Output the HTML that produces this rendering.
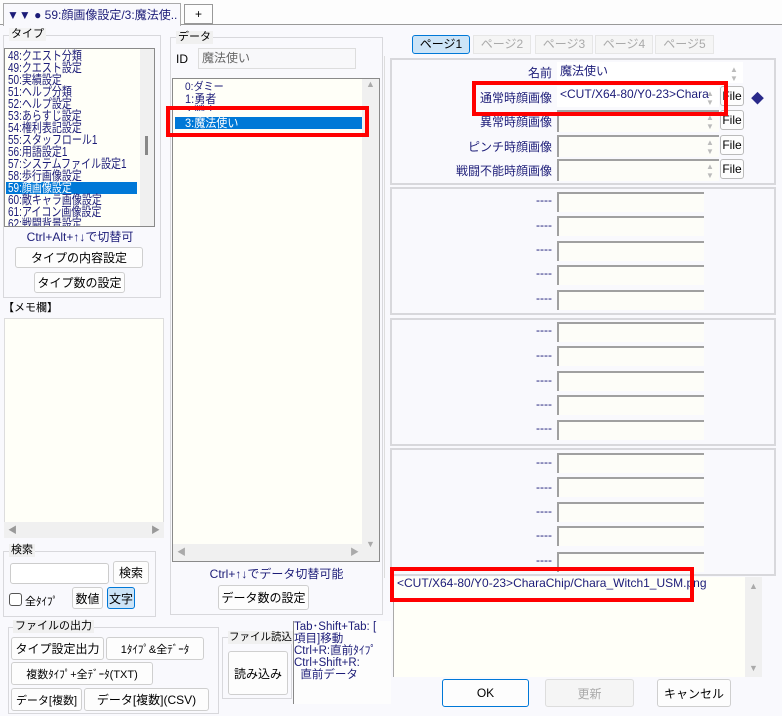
<!DOCTYPE html>
<html><head><meta charset="utf-8"><style>
*{box-sizing:border-box;margin:0;padding:0}
body{width:782px;height:716px;background:#f9f9fd;font-family:"Liberation Sans","Noto Sans CJK JP",sans-serif;font-size:12px;color:#000;position:relative;overflow:hidden}
.a{position:absolute}
.grp{position:absolute;border:1px solid #d8d8dc}
.lbl{position:absolute;background:#f0f0f0;padding:0 2px;line-height:13px;font-size:11px}
.btn{position:absolute;background:#fdfdfd;border:1px solid #cfcfcf;border-radius:3px;text-align:center;font-size:12px;display:flex;align-items:center;justify-content:center;white-space:nowrap}
.nav{color:#1c1c78}
.list{position:absolute;background:#fffff8;border:1px solid #8a8a8a}
.it{position:absolute;left:3px;height:12px;line-height:12px;font-size:12.5px;color:#1c1c78;white-space:nowrap;transform:scaleX(0.8);transform-origin:left center}
.dt{position:absolute;left:12px;height:12px;line-height:12px;font-size:12px;color:#1c1c78;white-space:nowrap;transform:scaleX(0.92);transform-origin:left center}
.in{position:absolute;background:#fdfdf8;border-top:2px solid #a0a0a0;border-left:2px solid #a0a0a0}
.rl{position:absolute;text-align:right;width:160px;color:#1c1c78;font-size:12px}
.red{position:absolute;border:4px solid #ff0000}
.fb{position:absolute;width:24px;height:20px;background:#fdfdfd;border:1px solid #bbb;border-radius:3px;font-size:12px;text-align:center;line-height:18px}
.sp{position:absolute;width:14px;color:#bbb;font-size:8px;text-align:center;line-height:9px}
.pt{position:absolute;top:35px;height:19px;border:1px solid #e6e6e6;background:#f5f5f5;color:#aaa;text-align:center;line-height:17px;font-size:12px}
</style></head><body>
<div class="a" style="left:0;top:0;width:782px;height:25px;background:#fdfdfd;border-bottom:1px solid #999"></div>
<div class="a" style="left:3px;top:3px;width:178px;height:23px;background:#f9f9fd;border:1px solid #aaa;border-bottom:none;font-size:12px;line-height:22px;padding-left:3px;color:#1c1c78;white-space:nowrap;overflow:hidden">▼▼ ● 59:顔画像設定/3:魔法使..</div>
<div class="a" style="left:184px;top:4px;width:29px;height:20px;border:1px solid #999;background:#fdfdfd;text-align:center;line-height:18px">+</div>

<div class="grp" style="left:3px;top:35px;width:158px;height:263px"></div>
<div class="lbl" style="left:9px;top:28px;background:#f3f3f3">タイプ</div>
<div class="list" style="left:4px;top:48px;width:151px;height:179px;overflow:hidden">
<div class="a" style="left:135px;top:0;width:15px;height:177px;background:#f0f0f0"></div>
<div class="a" style="left:140px;top:87px;width:3px;height:19px;background:#888"></div>
<div class="it" style="top:1px">48:クエスト分類</div>
<div class="it" style="top:13px">49:クエスト設定</div>
<div class="it" style="top:25px">50:実績設定</div>
<div class="it" style="top:37px">51:ヘルプ分類</div>
<div class="it" style="top:49px">52:ヘルプ設定</div>
<div class="it" style="top:61px">53:あらすじ設定</div>
<div class="it" style="top:73px">54:権利表記設定</div>
<div class="it" style="top:85px">55:スタッフロール1</div>
<div class="it" style="top:97px">56:用語設定1</div>
<div class="it" style="top:109px">57:システムファイル設定1</div>
<div class="it" style="top:121px">58:歩行画像設定</div>
<div class="a" style="left:1px;top:133px;width:131px;height:12px;background:#0078d7"></div>
<div class="it" style="top:133px;color:#fff">59:顔画像設定</div>
<div class="it" style="top:145px">60:敵キャラ画像設定</div>
<div class="it" style="top:157px">61:アイコン画像設定</div>
<div class="it" style="top:169px">62:戦闘背景設定</div>
</div>
<div class="a nav" style="left:0;width:160px;top:228px;text-align:center;font-size:12px">Ctrl+Alt+↑↓で切替可</div>
<div class="btn" style="left:15px;top:247px;width:128px;height:21px">タイプの内容設定</div>
<div class="btn" style="left:34px;top:272px;width:91px;height:21px">タイプ数の設定</div>

<div class="a" style="left:3px;top:299px;font-size:11px">【メモ欄】</div>
<div class="a" style="left:4px;top:318px;width:160px;height:220px;background:#fffff8;border:1px solid #ddd"></div>
<div class="a" style="left:4px;top:522px;width:160px;height:16px;background:#f0f0f0;color:#999;font-size:9px;line-height:16px;padding:0 4px">◀<span style="float:right">▶</span></div>

<div class="grp" style="left:3px;top:551px;width:153px;height:66px"></div>
<div class="lbl" style="left:9px;top:544px">検索</div>
<div class="a" style="left:10px;top:563px;width:99px;height:21px;background:#fff;border:1px solid #ccc;border-radius:3px"></div>
<div class="btn" style="left:113px;top:561px;width:36px;height:23px">検索</div>
<div class="a" style="left:9px;top:593px;width:13px;height:13px;border:1px solid #555;border-radius:3px;background:#fff"></div>
<div class="a" style="left:25px;top:593px;font-size:11px">全ﾀｲﾌﾟ</div>
<div class="btn" style="left:72px;top:587px;width:31px;height:22px">数値</div>
<div class="btn" style="left:107px;top:587px;width:28px;height:22px;background:#cce4f7;border-color:#0078d7">文字</div>

<div class="grp" style="left:8px;top:627px;width:211px;height:87px"></div>
<div class="lbl" style="left:13px;top:620px">ファイルの出力</div>
<div class="btn" style="left:11px;top:637px;width:93px;height:23px">タイプ設定出力</div>
<div class="btn" style="left:106px;top:637px;width:98px;height:23px;font-size:11px">1ﾀｲﾌﾟ&amp;全ﾃﾞｰﾀ</div>
<div class="btn" style="left:11px;top:662px;width:142px;height:23px;font-size:11px">複数ﾀｲﾌﾟ+全ﾃﾞｰﾀ(TXT)</div>
<div class="btn" style="left:11px;top:688px;width:71px;height:23px;font-size:11px">データ[複数]</div>
<div class="btn" style="left:84px;top:688px;width:125px;height:23px">データ[複数](CSV)</div>
<div class="grp" style="left:222px;top:637px;width:70px;height:62px"></div>
<div class="lbl" style="left:228px;top:631px;font-size:10.5px;padding:0 1px">ファイル読込</div>
<div class="btn" style="left:228px;top:651px;width:60px;height:44px">読み込み</div>
<div class="a nav" style="left:293px;top:621px;width:98px;height:83px;border-left:1px solid #888;background:#fdfdfd;font-size:11.5px;line-height:12px;white-space:nowrap;overflow:hidden">Tab･Shift+Tab: [<br>項目]移動<br>Ctrl+R:直前ﾀｲﾌﾟ<br>Ctrl+Shift+R:<br>&nbsp;&nbsp;直前データ</div>

<div class="grp" style="left:170px;top:37px;width:213px;height:578px"></div>
<div class="lbl" style="left:176px;top:31px">データ</div>
<div class="a" style="left:176px;top:52px;font-size:12px">ID</div>
<div class="a" style="left:198px;top:48px;width:158px;height:21px;border:1px solid #ddd;background:#f8f8fa;color:#666;padding-left:3px;line-height:19px">魔法使い</div>
<div class="list" style="left:172px;top:78px;width:208px;height:484px;overflow:hidden">
<div class="a" style="left:189px;top:0;width:17px;height:482px;background:#f0f0f0;color:#aaa;font-size:9px;text-align:center">▲<div style="position:absolute;bottom:12px;width:17px">▼</div></div>
<div class="a" style="left:0;top:465px;width:190px;height:17px;background:#f0f0f0;color:#aaa;font-size:9px;line-height:17px;padding:0 4px">◀<span style="float:right">▶</span></div>
<div class="dt" style="top:2px;font-size:11px">0:ダミー</div>
<div class="dt" style="top:14px">1:勇者</div>
<div class="dt" style="top:26px;height:6px;overflow:hidden">2:戦士</div>
<div class="a" style="left:2px;top:38px;width:187px;height:12px;background:#0078d7"></div>
<div class="dt" style="top:38px;color:#fff">3:魔法使い</div>
</div>
<div class="red" style="left:166px;top:106px;width:203px;height:31px"></div>
<div class="a nav" style="left:170px;width:213px;top:565px;text-align:center;font-size:12px">Ctrl+↑↓でデータ切替可能</div>
<div class="btn" style="left:218px;top:585px;width:91px;height:25px">データ数の設定</div>

<div class="a" style="left:384px;top:56px;width:392px;height:522px;border-left:1px solid #ddd"></div>
<div class="pt" style="left:412px;width:58px;background:#cce4f7;border-color:#0078d7;color:#000;border-radius:3px">ページ1</div>
<div class="pt" style="left:473px;width:58px">ページ2</div>
<div class="pt" style="left:535px;width:58px">ページ3</div>
<div class="pt" style="left:595px;width:58px">ページ4</div>
<div class="pt" style="left:655px;width:59px">ページ5</div>

<div class="grp" style="left:390px;top:58px;width:386px;height:127px;border-width:2px"></div>
<div class="rl" style="left:392px;top:64px">名前</div>
<div class="in" style="left:557px;top:62px;width:186px;height:21px;border:none;background:#fff;padding-left:3px;color:#1c1c78">魔法使い</div>
<div class="sp" style="left:727px;top:65px">▲<br>▼</div>
<div class="rl" style="left:392px;top:89px">通常時顔画像</div>
<div class="in" style="left:557px;top:86px;width:162px;height:21px;border:none;background:#fff;padding-left:3px;color:#1c1c78;white-space:nowrap;overflow:hidden;line-height:17px">&lt;CUT/X64-80/Y0-23&gt;Chara</div>
<div class="sp" style="left:703px;top:89px">▲<br>▼</div>
<div class="fb" style="left:720px;top:86px">File</div>
<div class="a" style="left:751px;top:88px;color:#2a2a8a;font-size:13px">◆</div>
<div class="rl" style="left:392px;top:113px">異常時顔画像</div>
<div class="in" style="left:557px;top:110px;width:162px;height:22px"></div>
<div class="sp" style="left:703px;top:113px">▲<br>▼</div>
<div class="fb" style="left:720px;top:110px">File</div>
<div class="rl" style="left:392px;top:138px">ピンチ時顔画像</div>
<div class="in" style="left:557px;top:135px;width:162px;height:22px"></div>
<div class="sp" style="left:703px;top:138px">▲<br>▼</div>
<div class="fb" style="left:720px;top:135px">File</div>
<div class="rl" style="left:392px;top:162px">戦闘不能時顔画像</div>
<div class="in" style="left:557px;top:159px;width:162px;height:22px"></div>
<div class="sp" style="left:703px;top:162px">▲<br>▼</div>
<div class="fb" style="left:720px;top:159px">File</div>
<div class="red" style="left:472px;top:81px;width:256px;height:35px"></div>

<div class="grp" style="left:390px;top:187px;width:386px;height:128px;border-width:2px"></div>
<div class="grp" style="left:390px;top:318px;width:386px;height:128px;border-width:2px"></div>
<div class="grp" style="left:390px;top:448px;width:386px;height:128px;border-width:2px"></div>
<div class="rl" style="left:392px;top:193px">----</div><div class="in" style="left:557px;top:192px;width:147px;height:20px"></div>
<div class="rl" style="left:392px;top:218px">----</div><div class="in" style="left:557px;top:216px;width:147px;height:20px"></div>
<div class="rl" style="left:392px;top:242px">----</div><div class="in" style="left:557px;top:241px;width:147px;height:20px"></div>
<div class="rl" style="left:392px;top:266px">----</div><div class="in" style="left:557px;top:265px;width:147px;height:20px"></div>
<div class="rl" style="left:392px;top:291px">----</div><div class="in" style="left:557px;top:290px;width:147px;height:20px"></div>
<div class="rl" style="left:392px;top:323px">----</div><div class="in" style="left:557px;top:322px;width:147px;height:20px"></div>
<div class="rl" style="left:392px;top:348px">----</div><div class="in" style="left:557px;top:346px;width:147px;height:20px"></div>
<div class="rl" style="left:392px;top:373px">----</div><div class="in" style="left:557px;top:371px;width:147px;height:20px"></div>
<div class="rl" style="left:392px;top:397px">----</div><div class="in" style="left:557px;top:395px;width:147px;height:20px"></div>
<div class="rl" style="left:392px;top:421px">----</div><div class="in" style="left:557px;top:420px;width:147px;height:20px"></div>
<div class="rl" style="left:392px;top:455px">----</div><div class="in" style="left:557px;top:453px;width:147px;height:20px"></div>
<div class="rl" style="left:392px;top:480px">----</div><div class="in" style="left:557px;top:477px;width:147px;height:20px"></div>
<div class="rl" style="left:392px;top:504px">----</div><div class="in" style="left:557px;top:502px;width:147px;height:20px"></div>
<div class="rl" style="left:392px;top:528px">----</div><div class="in" style="left:557px;top:526px;width:147px;height:20px"></div>
<div class="rl" style="left:392px;top:553px">----</div><div class="in" style="left:557px;top:552px;width:147px;height:20px"></div>

<div class="a" style="left:393px;top:577px;width:369px;height:100px;background:#fffff8;border-left:1px solid #aaa"></div>
<div class="a" style="left:745px;top:577px;width:17px;height:100px;background:#f0f0f0;color:#aaa;font-size:9px;text-align:center;padding-top:4px">▲<div style="position:absolute;bottom:4px;width:17px">▼</div></div>
<div class="a nav" style="left:397px;top:576px;font-size:12px;white-space:nowrap">&lt;CUT/X64-80/Y0-23&gt;CharaChip/Chara_Witch1_USM.png</div>
<div class="red" style="left:390px;top:567px;width:304px;height:35px"></div>
<div class="btn" style="left:442px;top:679px;width:87px;height:28px;border-color:#0078d7">OK</div>
<div class="btn" style="left:545px;top:679px;width:89px;height:28px;background:#f5f5f5;color:#aaa;border-color:#ddd">更新</div>
<div class="btn" style="left:657px;top:679px;width:74px;height:28px">キャンセル</div>
</body></html>
